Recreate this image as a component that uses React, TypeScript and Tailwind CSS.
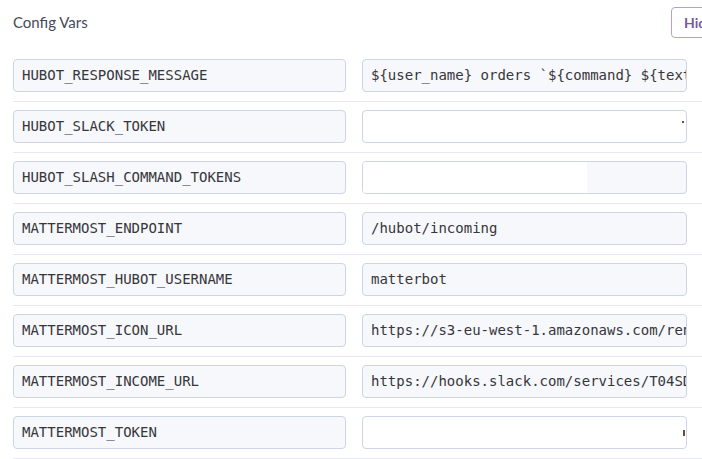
import React from 'react';

type Row = {
  name: string;
  value?: string;
  variant?: 'filled' | 'blank' | 'mark' | 'split' | 'tail';
};

const rows: Row[] = [
  { name: 'HUBOT_RESPONSE_MESSAGE', value: '${user_name} orders `${command} ${text}` in ${channel_name}' },
  { name: 'HUBOT_SLACK_TOKEN', variant: 'mark' },
  { name: 'HUBOT_SLASH_COMMAND_TOKENS', variant: 'split' },
  { name: 'MATTERMOST_ENDPOINT', value: '/hubot/incoming' },
  { name: 'MATTERMOST_HUBOT_USERNAME', value: 'matterbot' },
  { name: 'MATTERMOST_ICON_URL', value: 'https://s3-eu-west-1.amazonaws.com/renovate/matterbot.png' },
  { name: 'MATTERMOST_INCOME_URL', value: 'https://hooks.slack.com/services/T04SDKE9/B0AAH7' },
  { name: 'MATTERMOST_TOKEN', variant: 'tail' },
];

const mono = "font-['DejaVu_Sans_Mono',monospace] text-[14px] text-[#36363b]";

const ValueBox: React.FC<{ row: Row }> = ({ row }) => {
  const base = 'relative h-[33px] w-[325px] shrink-0 overflow-hidden rounded-[4px] border border-[#cdd5e4]';
  if (row.variant === 'mark') {
    return (
      <div className={`${base} bg-white`}>
        <span className="absolute right-[2px] top-[10px] h-[2px] w-[2px] bg-[#555]" />
      </div>
    );
  }
  if (row.variant === 'split') {
    return (
      <div className={`${base} flex bg-[#f7f8fb]`}>
        <div className="h-full w-[224px] bg-white" />
      </div>
    );
  }
  if (row.variant === 'tail') {
    return (
      <div className={`${base} bg-white`}>
        <span className="absolute right-[1px] top-[13px] h-[6px] w-[2px] bg-[#6b4a3a]" />
      </div>
    );
  }
  return (
    <div className={`${base} flex items-center bg-[#f7f8fb] pl-[8px]`}>
      <span className={`${mono} whitespace-nowrap`}>{row.value}</span>
    </div>
  );
};

const App: React.FC = () => {
  return (
    <div className="h-[459px] w-[702px] overflow-hidden bg-white font-['Lato',sans-serif]">
      <div className="w-[900px] pl-[13px]">
        <header className="flex h-[51px] items-start">
          <h2 className="w-[658px] shrink-0 pt-[11px] text-[15px] text-[#434c5a]">Config Vars</h2>
          <button className="mt-[7px] h-[31px] whitespace-nowrap rounded-[4px] border border-[#b79ed4] bg-white px-[12px] text-[14px] font-bold text-[#79589f]">
            Hide Config Vars
          </button>
        </header>

        <ul>
          {rows.map((row) => (
            <li
              key={row.name}
              className="flex gap-[16px] border-b border-[#e6e9ef] pb-[9px] pt-[8px]"
            >
              <div className="flex h-[33px] w-[333px] shrink-0 items-center rounded-[4px] border border-[#cdd5e4] bg-[#f7f8fb] pl-[8px]">
                <span className={mono}>{row.name}</span>
              </div>
              <ValueBox row={row} />
            </li>
          ))}
        </ul>
      </div>
    </div>
  );
};

export default App;
